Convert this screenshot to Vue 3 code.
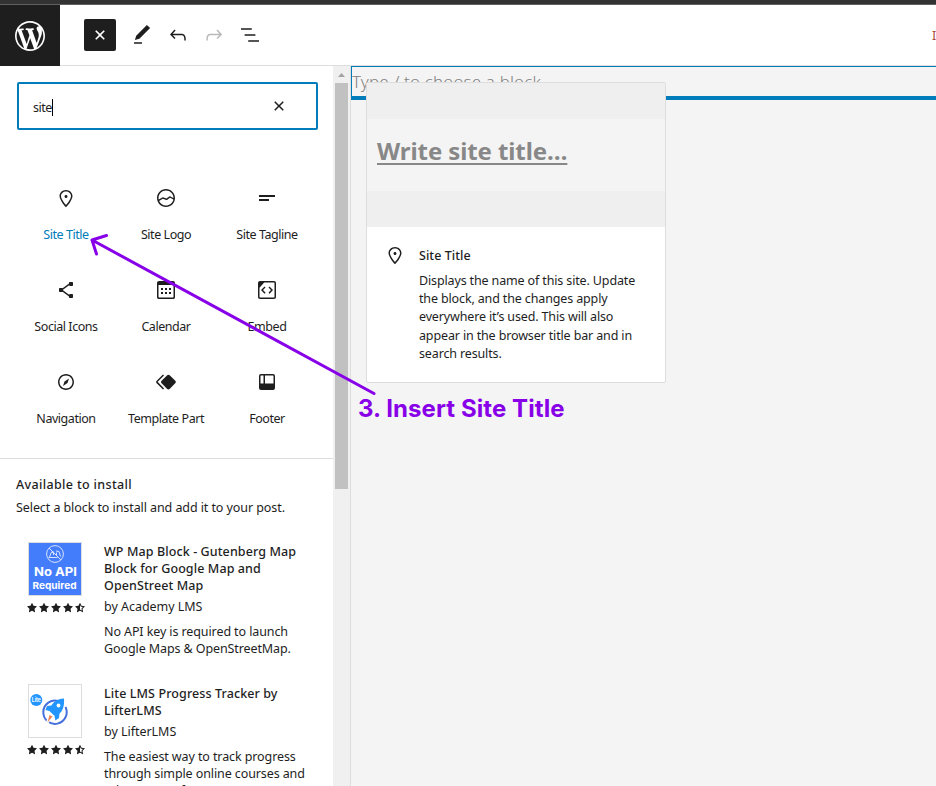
<script setup>
const icons = {
  marker: 'M12 9c-.8 0-1.5.7-1.5 1.5S11.2 12 12 12s1.5-.7 1.5-1.5S12.8 9 12 9zm0-5c-3.6 0-6.5 2.8-6.5 6.2 0 .8.3 1.8.9 3.1.5 1.1 1.2 2.3 2 3.6.7 1 3 3.8 3.2 3.9l.4.5.4-.5c.2-.2 2.6-2.9 3.2-3.9.8-1.2 1.5-2.5 2-3.6.6-1.3.9-2.3.9-3.1C18.5 6.8 15.6 4 12 4zm4.3 8.7c-.5 1-1.1 2.2-1.9 3.4-.5.7-1.7 2.2-2.4 3-.7-.8-1.9-2.3-2.4-3-.8-1.2-1.4-2.3-1.9-3.3-.6-1.4-.7-2.2-.7-2.5 0-2.6 2.2-4.7 5-4.7s5 2.1 5 4.7c0 .2-.1 1-.7 2.4z',
  siteLogo: 'M12 3c-5 0-9 4-9 9s4 9 9 9 9-4 9-9-4-9-9-9zm0 1.5c4.1 0 7.5 3.4 7.5 7.5v.1c-1.4-.8-3.3-1.7-3.4-1.8-.2-.1-.5-.1-.8.1l-2.9 2.1L9 11.3c-.2-.1-.4 0-.6.1l-3.7 2.2c-.1-.5-.2-1-.2-1.5 0-4.2 3.4-7.6 7.5-7.6zm0 15c-3.1 0-5.7-1.9-6.9-4.5l3.7-2.2 3.5 1.2c.2.1.5 0 .7-.1l2.9-2.1c.8.4 2.5 1.2 3.5 1.9-.9 3.3-3.9 5.8-7.4 5.8z',
  tagline: 'M4 9h16v2H4V9zm0 4h10v2H4v-2z',
  share: 'M9 11.8l6.1-4.5c.1.4.4.7.9.7h2c.6 0 1-.4 1-1V5c0-.6-.4-1-1-1h-2c-.6 0-1 .4-1 1v.4l-6.4 4.8c-.2-.1-.4-.2-.6-.2H6c-.6 0-1 .4-1 1v2c0 .6.4 1 1 1h2c.2 0 .4-.1.6-.2l6.4 4.8v.4c0 .6.4 1 1 1h2c.6 0 1-.4 1-1v-2c0-.6-.4-1-1-1h-2c-.5 0-.8.3-.9.7L9 12.2v-.4z',
  calendar: 'M19 3H5c-1.1 0-2 .9-2 2v14.2c0 1.1.9 1.8 2 1.8h14c1.1 0 2-.7 2-1.8V5c0-1.1-.9-2-2-2zm.5 16c0 .3-.2.5-.5.5H5c-.3 0-.5-.2-.5-.5V7h15v12zM9 10H7v2h2v-2zm0 4H7v2h2v-2zm4-4h-2v2h2v-2zm4 0h-2v2h2v-2zm-4 4h-2v2h2v-2zm4 0h-2v2h2v-2z',
  embed: 'M19 3H5c-1.1 0-2 .9-2 2v14c0 1.1.9 2 2 2h14c1.1 0 2-.9 2-2V5c0-1.1-.9-2-2-2zm.5 16c0 .3-.2.5-.5.5H5c-.3 0-.5-.2-.5-.5V9.8l4.7-5.3H19c.3 0 .5.2.5.5v14zm-6-9.5L16 12l-2.5 2.8 1.1 1L18 12l-3.5-3.5-1 1zm-3 0l-1-1L6 12l3.5 3.8 1.1-1L8 12l2.5-2.5z',
  navigation: 'M12 4c-4.4 0-8 3.6-8 8s3.6 8 8 8 8-3.6 8-8-3.6-8-8-8zm0 14.5c-3.6 0-6.5-2.9-6.5-6.5S8.4 5.5 12 5.5s6.5 2.9 6.5 6.5-2.9 6.5-6.5 6.5zM9 16l4.5-3L15 8.4l-4.5 3L9 16z',
  part: 'M21.3 10.8l-5.6-5.6c-.7-.7-1.8-.7-2.5 0l-5.6 5.6c-.7.7-.7 1.8 0 2.5l5.6 5.6c.3.3.8.5 1.2.5s.9-.2 1.2-.5l5.6-5.6c.8-.7.8-1.9.1-2.5zm-17.6 1L10 5.5l-1-1-6.3 6.3c-.7.7-.7 1.8 0 2.5L9 19.5l1.1-1.1-6.3-6.3c-.2 0-.2-.2-.1-.3z',
  footer: 'M18 5.5h-8v8h8.5V6a.5.5 0 00-.5-.5zm-9.5 8h-3V6a.5.5 0 01.5-.5h2.5v8zM6 4h12a2 2 0 012 2v12a2 2 0 01-2 2H6a2 2 0 01-2-2V6a2 2 0 012-2z',
  star: 'M11.776 4.454a.25.25 0 01.448 0l2.069 4.192a.25.25 0 00.188.137l4.626.672a.25.25 0 01.139.426l-3.348 3.263a.25.25 0 00-.072.222l.79 4.607a.25.25 0 01-.362.263l-4.138-2.175a.25.25 0 00-.232 0l-4.138 2.175a.25.25 0 01-.363-.263l.79-4.607a.25.25 0 00-.071-.222L4.754 9.881a.25.25 0 01.139-.426l4.626-.672a.25.25 0 00.188-.137l2.069-4.192z',
  halfStar: 'M9.518 8.783a.25.25 0 00.188-.137l2.069-4.192a.25.25 0 01.448 0l2.07 4.192a.25.25 0 00.187.137l4.626.672a.25.25 0 01.139.427l-3.347 3.262a.25.25 0 00-.072.222l.79 4.607a.25.25 0 01-.363.264l-4.137-2.176a.25.25 0 00-.233 0l-4.138 2.175a.25.25 0 01-.362-.263l.79-4.607a.25.25 0 00-.072-.222L4.753 9.882a.25.25 0 01.14-.427l4.625-.672zM12 14.533c.28 0 .559.067.814.2l1.895.997-.362-2.11a1.75 1.75 0 01.504-1.55l1.533-1.495-2.12-.308a1.75 1.75 0 01-1.317-.957L12 7.39v7.143z',
}

const blocks = [
  { name: 'Site Title', icon: 'marker', active: true },
  { name: 'Site Logo', icon: 'siteLogo' },
  { name: 'Site Tagline', icon: 'tagline' },
  { name: 'Social Icons', icon: 'share' },
  { name: 'Calendar', icon: 'calendar' },
  { name: 'Embed', icon: 'embed' },
  { name: 'Navigation', icon: 'navigation' },
  { name: 'Template Part', icon: 'part' },
  { name: 'Footer', icon: 'footer' },
]

const plugins = [
  {
    id: 'map',
    title: ['WP Map Block - Gutenberg Map', 'Block for Google Map and', 'OpenStreet Map'],
    author: 'by Academy LMS',
    text: ['No API key is required to launch', 'Google Maps & OpenStreetMap.'],
  },
  {
    id: 'lms',
    title: ['Lite LMS Progress Tracker by', 'LifterLMS'],
    author: 'by LifterLMS',
    text: ['The easiest way to track progress', 'through simple online courses and', 'other types of content.'],
  },
]

const summary = [
  'Displays the name of this site. Update',
  'the block, and the changes apply',
  'everywhere it’s used. This will also',
  'appear in the browser title bar and in',
  'search results.',
]
</script>

<template>
  <div class="screen">
    <div class="strip"></div>
    <header class="topbar">
      <div class="wp">
        <svg width="36" height="36" viewBox="-2 -2 24 24"><path fill="#fff" d="M20 10c0-5.51-4.49-10-10-10C4.48 0 0 4.49 0 10c0 5.52 4.48 10 10 10 5.51 0 10-4.48 10-10zM7.78 15.37L4.37 6.22c.55-.02 1.17-.08 1.17-.08.5-.06.44-1.13-.06-1.11 0 0-1.45.11-2.37.11-.18 0-.37 0-.58-.01C4.12 2.69 6.87 1.11 10 1.11c2.33 0 4.45.87 6.05 2.34-.68-.11-1.65.39-1.65 1.58 0 .74.45 1.36.9 2.1.35.61.55 1.36.55 2.46 0 1.49-1.4 5-1.4 5l-3.03-8.37c.54-.02.82-.17.82-.17.5-.05.44-1.25-.06-1.22 0 0-1.44.12-2.38.12-.87 0-2.33-.12-2.33-.12-.5-.03-.56 1.2-.06 1.22l.92.08 1.26 3.41zM17.41 10c.24-.64.74-1.87.43-4.25.7 1.29 1.05 2.71 1.05 4.25 0 3.29-1.73 6.24-4.4 7.78.97-2.59 1.94-5.2 2.92-7.78zM6.1 18.09C3.12 16.65 1.11 13.53 1.11 10c0-1.3.23-2.48.72-3.59C3.25 10.3 4.67 14.2 6.1 18.09zm4.03-6.63l2.58 6.98c-.86.29-1.76.45-2.71.45-.79 0-1.57-.11-2.29-.33.81-2.38 1.62-4.74 2.42-7.1z" /></svg>
      </div>
      <nav class="tools">
        <button class="toggle"><svg class="turn" width="24" height="24" viewBox="0 0 24 24"><path fill="#fff" d="M18 11.2h-5.2V6h-1.6v5.2H6v1.6h5.2V18h1.6v-5.2H18z" /></svg></button>
        <svg width="24" height="24" viewBox="0 0 24 24"><path d="M20.1 5.1L16.9 2 6.2 12.7l-1.3 4.4 4.5-1.3L20.1 5.1zM4 20.8h8v-1.5H4v1.5z" /></svg>
        <svg width="24" height="24" viewBox="0 0 24 24"><path d="M18.3 11.7c-.6-.6-1.4-.9-2.3-.9H6.7l2.9-3.3-1.1-1-4.5 5L8.5 16l1-1-2.7-2.7H16c.5 0 .9.2 1.3.5 1 1 1 3.4 1 4.5v.3h1.5v-.2c0-1.5 0-4.3-1.5-5.7z" /></svg>
        <svg class="off" width="24" height="24" viewBox="0 0 24 24"><path d="M15.6 6.5l-1.1 1 2.9 3.3H8c-.9 0-1.7.3-2.3.9-1.4 1.5-1.4 4.2-1.4 5.6v.2h1.5v-.3c0-1.1 0-3.5 1-4.5.3-.3.7-.5 1.3-.5h9.2L14.5 15l1.1 1.1 4.6-4.6-4.6-5z" /></svg>
        <svg width="24" height="24" viewBox="0 0 24 24"><path d="M13.8 5.2H3v1.5h10.8V5.2zm-3.6 12v1.5H21v-1.5H10.2zm7.2-6H6.6v1.5h10.8v-1.5z" /></svg>
      </nav>
      <span class="mode">In</span>
    </header>

    <main class="body">
      <aside class="inserter">
        <div class="search">
          <span class="query">site</span><i class="caret"></i>
          <svg class="clear" width="24" height="24" viewBox="0 0 24 24"><path d="M12 13.06l3.712 3.713 1.061-1.06L13.061 12l3.712-3.712-1.06-1.06L12 10.938 8.288 7.227l-1.061 1.06L10.939 12l-3.712 3.712 1.06 1.061L12 13.061z" /></svg>
        </div>
        <div class="grid">
          <div v-for="b in blocks" :key="b.name" class="cell" :class="{ active: b.active }">
            <svg width="24" height="24" viewBox="0 0 24 24"><path fill-rule="evenodd" :d="icons[b.icon]" /></svg>
            <span>{{ b.name }}</span>
          </div>
        </div>
        <section class="install">
          <h2>Available to install</h2>
          <p class="lead">Select a block to install and add it to your post.</p>
          <article v-for="p in plugins" :key="p.id" class="plugin">
            <div class="side">
              <div class="thumb" :class="p.id">
                <svg v-if="p.id === 'map'" width="52" height="52" viewBox="0 0 52 52">
                  <rect width="52" height="52" fill="#447dfb" />
                  <g fill="none" stroke="#d5e2ff" stroke-width="1">
                    <circle cx="26" cy="11" r="8.4" />
                    <path d="M20 5l12 12M19.500 14.500h9M20.500 14l2-5 2.500 1M27 8l3 .5 1.500 5" />
                    <path d="M24.500 8.500v3.500M27.500 9.500v3" />
                  </g>
                  <text x="5" y="33" textLength="43" lengthAdjust="spacingAndGlyphs" class="t1">No API</text>
                  <text x="3.500" y="45.500" textLength="44" lengthAdjust="spacingAndGlyphs" class="t2">Required</text>
                </svg>
                <svg v-else width="52" height="52" viewBox="0 0 52 52">
                  <path d="M29.500 16A11.700 11.700 0 1 0 36.500 22" fill="none" stroke="#456fdc" stroke-width="2" />
                  <path d="M35 13.500c-7 .5-10 3-12.500 7l-4.500.5-1.500 4 4 1 5 5 .8 4.500 3.700-2.500.5-4.500c3.500-3 5-8 4.500-15z" fill="#2295ff" />
                  <circle cx="29.500" cy="20.500" r="1.900" fill="#fff" />
                  <path d="M20.500 29l-2.500 9 6-7z" fill="#fff" stroke="#fff" stroke-width="2" />
                  <path d="M20.500 30l-2 7.500 5-6z" fill="#ef8354" />
                  <circle cx="7.300" cy="15" r="6" fill="#2295ff" />
                  <text x="2.800" y="17" textLength="9" lengthAdjust="spacingAndGlyphs" class="t3">Lite</text>
                </svg>
              </div>
              <div class="stars">
                <svg v-for="n in 5" :key="n" width="16" height="16" viewBox="0 0 24 24"><path fill-rule="evenodd" :d="n < 5 ? icons.star : icons.halfStar" /></svg>
              </div>
            </div>
            <div class="info">
              <h3><span v-for="l in p.title" :key="l">{{ l }}</span></h3>
              <p class="author">{{ p.author }}</p>
              <p class="desc"><span v-for="l in p.text" :key="l">{{ l }}</span></p>
            </div>
          </article>
        </section>
      </aside>
      <div class="scroll">
        <svg width="17" height="17" viewBox="0 0 17 17"><path fill="#a3a3a3" d="M5 11h7L8.500 7z" /></svg>
        <div class="bar"></div>
      </div>
      <section class="canvas">
        <div class="prompt">Type / to choose a block</div>
      </section>
    </main>

    <div class="popover">
      <div class="preview"><div class="sample"><span>Write site title…</span></div></div>
      <div class="card">
        <svg width="24" height="24" viewBox="0 0 24 24"><path :d="icons.marker" /></svg>
        <div class="text">
          <h4>Site Title</h4>
          <p><span v-for="l in summary" :key="l">{{ l }}</span></p>
        </div>
      </div>
    </div>

    <svg class="arrow" width="310" height="180" viewBox="0 0 310 180"><path d="M294 163.500L12 10M26.500 5.500L12 10l4.500 14" /></svg>
    <div class="note">3. Insert Site Title</div>
  </div>
</template>

<style>
body { margin: 0; overflow: hidden; }
</style>

<style scoped>
.screen {
  position: relative;
  width: 936px;
  height: 786px;
  overflow: hidden;
  display: flex;
  flex-direction: column;
  background: #f4f4f4;
  color: #1e1e1e;
  font: 12.5px/17px "Noto Sans", "Open Sans", sans-serif;
  letter-spacing: -0.1px;
}
.screen * { box-sizing: border-box; }
svg { display: block; flex: none; fill: #1e1e1e; }
h2, h3, h4, p { margin: 0; font-size: inherit; }
h2, h3, h4 { font-weight: 500; }
.strip { height: 5px; flex: none; background: #333; border-bottom: 1px solid #606060; }
.topbar { height: 61px; flex: none; display: flex; background: linear-gradient(#fff 60px, #ddd 60px); }
.wp { width: 60px; height: 61px; background: #1e1e1e; display: flex; align-items: center; justify-content: center; }
.tools { display: flex; align-items: center; gap: 12px; padding: 0 0 1px 24px; }
.toggle { width: 32px; height: 32px; margin-right: 2px; padding: 0; border: 0; border-radius: 2px; background: #1e1e1e; display: flex; align-items: center; justify-content: center; }
.turn { transform: rotate(45deg); }
.off { opacity: .3; }
.mode { margin-left: auto; margin-right: -10px; padding-top: 22px; width: 14px; color: #a9473c; }
.body { display: flex; height: 720px; }
.inserter { width: 333px; flex: none; background: #fff; overflow: hidden; white-space: nowrap; }
.search { margin: 16px 15px 0 17px; height: 48px; border: 2px solid #007cba; border-radius: 2px; display: flex; align-items: center; padding: 2px 25px 0 14px; }
.query { letter-spacing: -.5px; }
.caret { width: 1px; height: 17px; background: #000; }
.clear { margin-left: auto; margin-top: -3px; }
.grid { margin: 34px 0 0 16px; display: grid; grid-template-columns: 100px 100px 102px; grid-auto-rows: 92px; letter-spacing: -.45px; }
.cell { display: flex; flex-direction: column; align-items: center; padding-top: 22px; gap: 16px; }
.active span { color: #007cba; }
.install { margin-top: 18px; border-top: 1px solid #ddd; padding: 17px 16px 0; }
.lead { margin-top: 6px; letter-spacing: -.08px; }
.install h2 { letter-spacing: .35px; }
.plugin { display: flex; padding: 26px 0 0 12px; gap: 22px; height: 142px; }
.side { width: 54px; flex: none; }
.thumb { width: 54px; height: 54px; border: 1px solid #ddd; }
.stars { display: flex; margin: 4px 0 0 -4px; width: 70px; }
.stars svg { margin-right: -4px; }
.info { padding-top: 1px; }
.info h3 { letter-spacing: .1px; }
h3 span, p span { display: block; white-space: nowrap; }
.author { margin-top: 4px; letter-spacing: -.03px; }
.desc { margin-top: 8px; }
.t1, .t2, .t3 { fill: #fff; font-family: "Inter", sans-serif; font-weight: 700; letter-spacing: 0; }
.t1 { font-size: 12px; }
.t2 { font-size: 9.5px; }
.t3 { font-size: 5.5px; }
.scroll { width: 18px; flex: none; background: #f0f0f0; border-right: 1px solid #ddd; }
.bar { width: 13px; height: 406px; margin-left: 2px; background: #c1c1c1; }
.canvas { flex: 1; background: #f4f4f4; }
.prompt { height: 34px; border: solid #007cba; border-width: 1px 0 4px 1px; color: #808080; font-size: 17px; font-weight: 300; line-height: 29px; letter-spacing: .15px; white-space: nowrap; }
.popover { position: absolute; left: 366px; top: 82px; width: 300px; height: 301px; border: 1px solid #ddd; border-radius: 2px; background: #fff; }
.preview { height: 144px; background: #efefef; padding: 36px 0; }
.sample { height: 72px; padding: 14px 0 0 10px; background: #f4f4f4; color: #888; font-weight: 700; font-size: 24px; line-height: 36px; letter-spacing: -.1px; }
.sample span { text-decoration: underline; text-decoration-thickness: 2px; text-underline-offset: 3px; }
.card { display: flex; gap: 12px; padding: 16px; }
.text { padding-top: 1px; }
.card h4 { line-height: 24px; letter-spacing: .05px; }
.card p { margin-top: 4px; line-height: 18.2px; letter-spacing: -.14px; }
.arrow { position: absolute; left: 80px; top: 230px; fill: none; stroke: #8800e8; stroke-width: 3; stroke-linecap: round; stroke-linejoin: round; }
.note { position: absolute; left: 358px; top: 394px; font: 700 24px/30px "Inter", sans-serif; letter-spacing: .08px; color: #8800e8; white-space: nowrap; }
</style>
